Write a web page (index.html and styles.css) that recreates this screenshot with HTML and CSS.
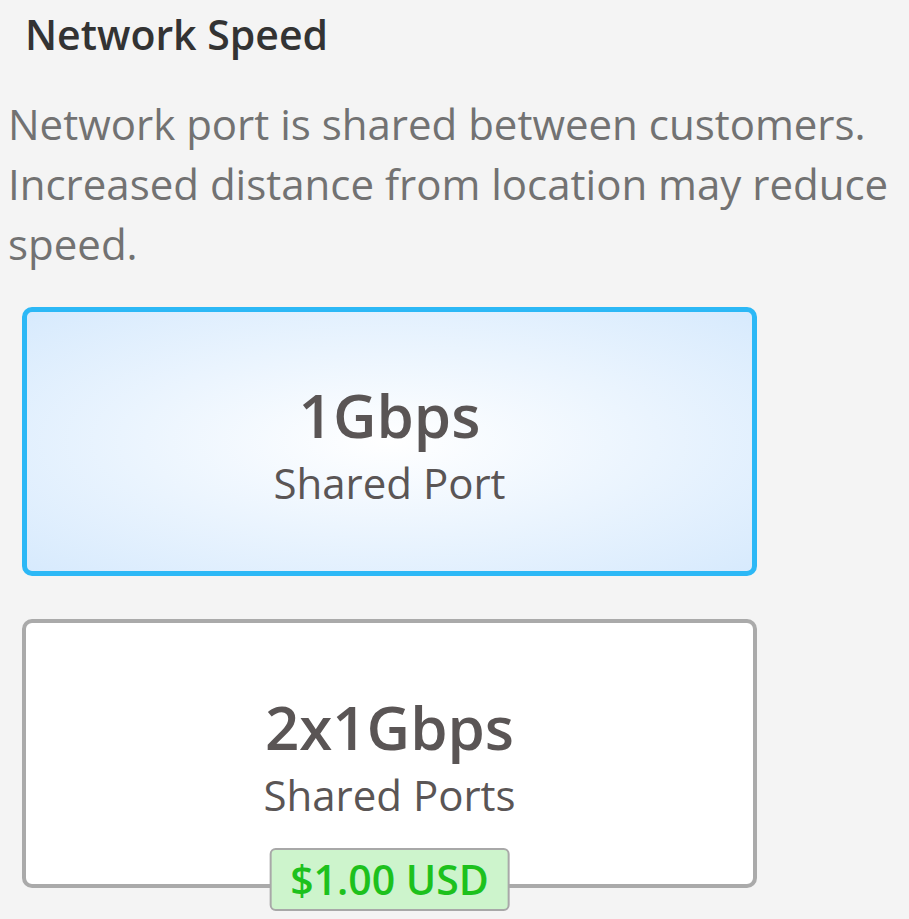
FILE: index.html
```html
<!DOCTYPE html>
<html>
<head>
<meta charset="utf-8">
<link rel="stylesheet" href="styles.css">
</head>
<body>
<div class="page">
  <h2 class="title">Network Speed</h2>
  <p class="desc">Network port is shared between customers. Increased distance from location may reduce speed.</p>
  <div class="options">
    <div class="option selected">
      <div class="speed">1Gbps</div>
      <div class="kind">Shared Port</div>
    </div>
    <div class="option">
      <div class="speed">2x1Gbps</div>
      <div class="kind">Shared Ports</div>
      <div class="price">$1.00 USD</div>
    </div>
  </div>
</div>
</body>
</html>
```

FILE: styles.css
```css
html, body {
  margin: 0;
  padding: 0;
  background: #f4f4f4;
  font-family: "Open Sans", "Noto Sans", sans-serif;
}
.page {
  width: 909px;
  height: 919px;
  overflow: hidden;
}
.title {
  margin: 0;
  padding: 7px 0 0 25px;
  font-size: 41px;
  line-height: 54px;
  font-weight: 600;
  color: #333333;
}
.desc {
  margin: 0;
  padding: 33px 0 0 8px;
  font-size: 42px;
  line-height: 60px;
  color: #727272;
}
.options {
  display: flex;
  flex-direction: column;
  gap: 43px;
  margin: 33px 0 0 22px;
  width: 735px;
}
.option {
  position: relative;
  box-sizing: border-box;
  height: 269px;
  padding-top: 8px;
  border: 4px solid #aaaaaa;
  border-radius: 10px;
  background: #ffffff;
  display: flex;
  flex-direction: column;
  align-items: center;
  justify-content: center;
  color: #5a5555;
}
.option.selected {
  border: 5px solid #2cb8f6;
  background: radial-gradient(ellipse at center, #ffffff 0%, #d7eafd 100%);
}
.speed {
  font-size: 60px;
  line-height: 75px;
  font-weight: 600;
}
.kind {
  font-size: 42px;
  line-height: 60px;
}
.price {
  position: absolute;
  left: 50%;
  bottom: -27px;
  transform: translateX(-50%);
  background: #cdf4cc;
  border: 2px solid #a8a8a8;
  border-radius: 6px;
  padding: 0 19px;
  font-size: 41px;
  line-height: 59px;
  font-weight: 600;
  color: #1dc11d;
  white-space: nowrap;
}
```
